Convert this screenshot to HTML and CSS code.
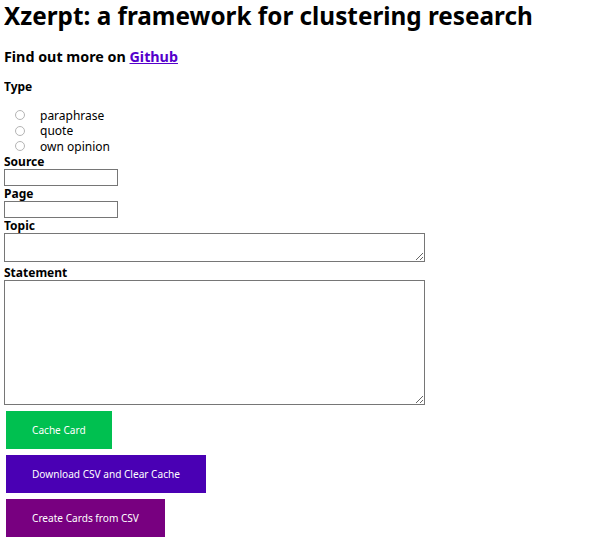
FILE: index.html
```html
<!DOCTYPE html>
<html>
<head>
<meta charset="utf-8">
<link rel="stylesheet" href="styles.css">
</head>
<body>
<h1 class="title">Xzerpt: a framework for clustering research</h1>
<h3 class="sub">Find out more on <a href="#">Github</a></h3>
<form class="form">
  <div class="label type-label">Type</div>
  <div class="radios">
    <label class="radio"><input type="radio" name="type"><span>paraphrase</span></label>
    <label class="radio"><input type="radio" name="type"><span>quote</span></label>
    <label class="radio"><input type="radio" name="type"><span>own opinion</span></label>
  </div>
  <div class="label">Source</div>
  <input class="text" type="text">
  <div class="label">Page</div>
  <input class="text" type="text">
  <div class="label">Topic</div>
  <textarea class="area topic"></textarea>
  <div class="label statement-label">Statement</div>
  <textarea class="area statement"></textarea>
  <div class="buttons">
    <button type="button" class="btn green">Cache Card</button>
    <button type="button" class="btn blue">Download CSV and Clear Cache</button>
    <button type="button" class="btn purple">Create Cards from CSV</button>
  </div>
</form>
</body>
</html>
```
FILE: styles.css
```css
body {
  margin: 0 4px;
  font-family: "Noto Sans", sans-serif;
  color: #000;
}
.title {
  font-size: 24.3px;
  margin: 0;
  line-height: 32px;
}
.sub {
  font-size: 14.3px;
  margin: 15px 0 0;
  line-height: 20px;
}
.sub a { color: #5500cc; }
.form { display: flex; flex-direction: column; align-items: flex-start; margin-top: 12px; }
.label { font-size: 12px; font-weight: bold; line-height: 15px; }
.type-label { line-height: 16px; margin-bottom: 12.5px; }
.radios { display: flex; flex-direction: column; padding-left: 11px; }
.radio { display: flex; align-items: center; font-size: 12px; line-height: 15.5px; height: 15.5px; }
.radio input {
  appearance: none;
  -webkit-appearance: none;
  margin: 0 15px 0 0;
  width: 10px;
  height: 10px;
  border: 1px solid #b4b4b4;
  border-radius: 50%;
  background: #fff;
  box-sizing: border-box;
}
.text { width: 114px; height: 17px; box-sizing: border-box; margin: 0; border: 1px solid #767676; padding: 1px 2px; }
.area { width: 421px; box-sizing: border-box; margin: 0; border: 1px solid #767676; }
.topic { height: 29px; }
.statement-label { margin-top: 3px; }
.statement { height: 125px; }
.buttons { display: flex; flex-direction: column; align-items: flex-start; gap: 6px; margin: 6px 0 0 2px; }
.btn {
  border: none;
  height: 38px;
  color: #fff;
  font-family: "Noto Sans", sans-serif;
  font-size: 10.1px;
  padding: 0 26px;
  white-space: nowrap;
}
.green { background: #00c050; }
.blue { background: #4a00b4; }
.purple { background: #780080; }
```
